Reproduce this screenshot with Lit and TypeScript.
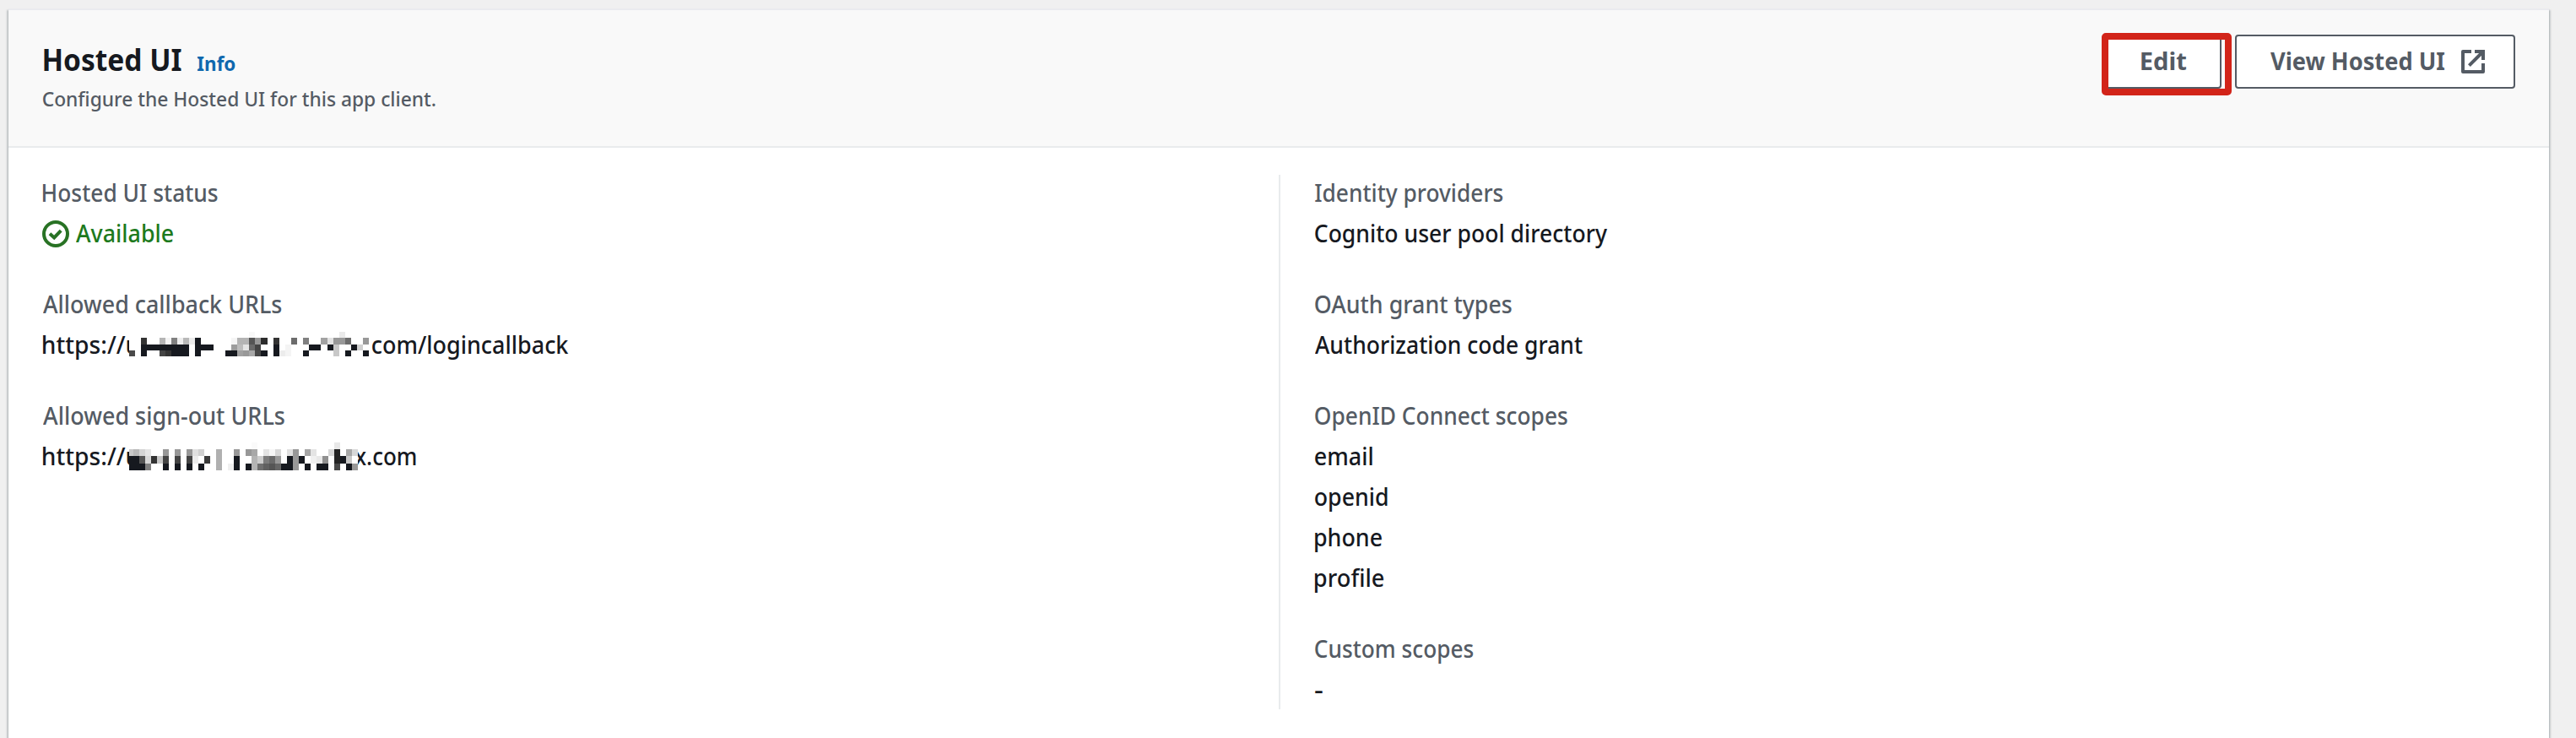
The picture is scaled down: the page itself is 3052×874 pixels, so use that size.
import { LitElement, html, svg, css } from "lit";
import { customElement, property } from "lit/decorators.js";

const FAMILY = '"Noto Sans", "Open Sans", sans-serif';
const ctx = document.createElement("canvas").getContext("2d")!;

/** One line of text whose glyphs are condensed to span exactly `w` pixels. */
@customElement("fit-text")
class FitText extends LitElement {
  @property() text = "";
  @property({ type: Number }) w = 0;
  @property({ type: Number }) size = 28;
  @property({ type: Number }) weight = 400;

  static styles = css`
    :host {
      display: inline-block;
      flex: none;
      white-space: pre;
    }
    .box {
      display: block;
    }
    .glyphs {
      display: inline-block;
      transform-origin: 0 50%;
    }
  `;

  render() {
    // Measured at ten times the size, since the ink bounds are whole pixels.
    ctx.font = `${this.weight} ${this.size * 10}px ${FAMILY}`;
    const m = ctx.measureText(this.text);
    const left = m.actualBoundingBoxLeft / 10;
    const scale = this.w / (m.actualBoundingBoxRight / 10 + left);
    const shift = left * scale;
    return html`<span class="box" style="width:${this.w}px"
      ><span
        class="glyphs"
        style="font-size:${this.size}px;font-weight:${this.weight};transform:translateX(${shift}px) scaleX(${scale})"
        >${this.text}</span
      ></span
    >`;
  }
}

type Mosaic = { cw: number; ch: number; cols: number; rows: Record<number, string>[]; clip: number };

const row = (s: string): Record<number, string> =>
  Object.fromEntries(s.split(" ").map((p) => p.split(":") as [string, string]));

const CALLBACK: Mosaic = {
  cw: 7.11,
  ch: 7.33,
  cols: 40,
  clip: 0,
  rows: [
    row("20:f8 35:ea"),
    row("2:33 5:b5 6:f4 7:80 8:ee 9:b8 10:ec 11:16 17:f5 18:b4 19:b4 20:55 21:98 22:2c 24:33 27:6c 29:80 32:a2 33:e2 34:98 35:98 36:6c 39:98"),
    row("2:16 3:16 4:16 5:16 6:16 7:16 8:16 9:16 11:16 12:16 13:16 17:9c 18:bc 19:e4 20:6a 21:44 24:16 26:f4 30:16 31:16 33:16 34:c8 37:16 38:d0"),
    row("0:4a 2:16 5:44 6:33 7:16 8:16 9:16 11:16 16:16 17:16 18:a0 19:98 20:a8 21:48 22:16 24:16 25:ec 26:f4 29:16 34:c8 36:16 39:16"),
  ],
};

const SIGNOUT: Mosaic = {
  cw: 7,
  ch: 8.2,
  cols: 39,
  clip: 2,
  rows: [
    row("21:fa 35:e8"),
    row("0:c8 1:b8 2:d4 3:e4 6:98 8:98 10:98 11:e0 12:d0 15:b0 18:98 20:98 21:a8 23:e4 24:f6 25:d8 27:e0 28:98 30:a6 31:e4 34:d8 35:24 37:a8 38:d8"),
    row("0:16 1:16 2:55 3:d8 4:33 5:c8 6:44 8:44 10:44 11:ec 13:3a 15:b0 18:16 21:b4 22:cc 23:7c 24:6a 25:98 27:16 28:98 29:16 31:f0 32:e8 33:90 35:24 36:16 37:c8"),
    row("0:16 1:16 2:16 3:80 6:16 8:16 10:16 12:16 15:b0 17:f0 18:16 20:16 21:b4 22:70 23:60 24:55 25:66 26:16 27:16 28:98 30:16 32:16 33:16 35:48 37:16 38:98"),
  ],
};

const mosaic = (m: Mosaic, cls: string) => {
  const w = m.cw * m.cols;
  const h = m.ch * 4;
  return html`<svg class=${cls} width=${w - m.clip} height=${h} viewBox="${m.clip} 0 ${w - m.clip} ${h}" shape-rendering="crispEdges">
    <rect width=${w} height=${h} fill="#fff" />
    ${m.rows.map((r, y) =>
      Object.entries(r).map(([x, g]) => {
        const fill = g === "16" ? "#16191f" : `#${g}${g}${g}`;
        return svg`<rect x=${+x * m.cw} y=${y * m.ch} width=${m.cw} height=${m.ch} fill=${fill} />`;
      })
    )}
  </svg>`;
};

@customElement("app-root")
class AppRoot extends LitElement {
  static styles = css`
    :host {
      display: block;
      height: 874px;
      box-sizing: border-box;
      padding: 10px 32px 0 10px;
      overflow: hidden;
      background: #f0f0f0;
      color: #16191f;
      font-family: "Noto Sans", "Open Sans", sans-serif;
    }
    .panel {
      height: 900px;
      box-sizing: border-box;
      background: #fff;
      border-top: 2px solid #eaebee;
      box-shadow: 0 2px 2px 0 rgba(0, 28, 36, 0.3), 2px 2px 2px 0 rgba(0, 28, 36, 0.15),
        -2px 2px 2px 0 rgba(0, 28, 36, 0.15);
    }
    .header {
      display: flex;
      justify-content: space-between;
      box-sizing: border-box;
      height: 163px;
      padding: 29px 40px 0 42px;
      background: #f9f9f9;
      border-bottom: 2px solid #e9ebed;
    }
    .title {
      display: flex;
      align-items: baseline;
      gap: 19px;
      line-height: 60px;
      height: 60px;
    }
    .info {
      color: #0f68ae;
    }
    .desc {
      margin-left: -1px;
      line-height: 32px;
      color: #545b64;
    }
    .actions {
      display: flex;
      align-items: flex-start;
      gap: 16px;
    }
    .button {
      position: relative;
      display: flex;
      align-items: center;
      box-sizing: border-box;
      height: 64px;
      border: 2px solid #545b64;
      border-radius: 4px;
      padding: 0 40px;
      background: #fff;
      color: #545b64;
      line-height: 60px;
    }
    .button fit-text {
      margin-top: 2px;
    }
    .edit {
      width: 139px;
      padding-left: 42px;
    }
    .view {
      width: 332px;
      padding-right: 32px;
      gap: 18px;
    }
    .highlight {
      position: absolute;
      left: -5px;
      top: -4px;
      width: 154px;
      height: 74px;
      box-sizing: border-box;
      border: 8px solid #d22419;
      border-radius: 5px;
    }
    .external {
      flex: none;
      fill: none;
      stroke: #545b64;
      stroke-width: 2;
    }
    .body {
      display: grid;
      grid-template-columns: 1fr 1fr;
      padding: 32px 40px 0;
    }
    .column {
      display: flex;
      flex-direction: column;
      gap: 39px;
    }
    .column + .column {
      border-left: 2px solid #e9ebed;
      padding-left: 40px;
    }
    .label {
      height: 45px;
      line-height: 42px;
      color: #545b64;
    }
    .label,
    .value {
      display: flex;
      padding-left: 1px;
    }
    .value {
      height: 48px;
      line-height: 48px;
    }
    .available {
      padding-left: 0;
      gap: 8px;
      color: #1d7a1d;
    }
    .status {
      margin-top: 9px;
      fill: none;
      stroke: #287224;
      stroke-width: 2;
    }
    .mosaic-callback {
      position: relative;
      z-index: 1;
      flex: none;
      margin: 9px 4px 0 -11px;
    }
    .mosaic-signout {
      position: relative;
      z-index: 1;
      flex: none;
      margin: 8px -4px 0 -11px;
    }
  `;

  private text(text: string, w: number, size = 28, weight = 500, cls = "") {
    return html`<fit-text class=${cls} text=${text} w=${w} size=${size} weight=${weight}></fit-text>`;
  }

  private field(label: string, w: number, values: [string, number][]) {
    return html`<div>
      <div class="label">${this.text(label, w)}</div>
      ${values.map(([t, tw]) => html`<div class="value">${this.text(t, tw)}</div>`)}
    </div>`;
  }

  render() {
    return html`<section class="panel">
      <header class="header">
        <div>
          <div class="title">
            ${this.text("Hosted UI", 162.6, 36, 700)} ${this.text("Info", 44.3, 24, 700, "info")}
          </div>
          <div class="desc">${this.text("Configure the Hosted UI for this app client.", 464.5, 24)}</div>
        </div>
        <div class="actions">
          <div class="button edit">${this.text("Edit", 53, 28, 700)}<span class="highlight"></span></div>
          <div class="button view">
            ${this.text("View Hosted UI", 206, 28, 700)}
            <svg class="external" width="32" height="32" viewBox="0 0 16 16">
              <path d="M9 2h5v5" />
              <path d="M5.7 10.3 14 2" />
              <path stroke-linejoin="round" d="M14 9v5H2V2h5" />
            </svg>
          </div>
        </div>
      </header>
      <div class="body">
        <div class="column">
          <div>
            <div class="label">${this.text("Hosted UI status", 206.8)}</div>
            <div class="value available">
              <svg class="status" width="32" height="32" viewBox="0 0 16 16">
                <circle cx="8" cy="8" r="7" />
                <path d="M4.5 7.9 7.1 10.2 11.1 6.1" />
              </svg>
              ${this.text("Available", 115)}
            </div>
          </div>
          <div>
            <div class="label">${this.text("Allowed callback URLs", 282.5)}</div>
            <div class="value">
              ${this.text("https://u", 113)}${mosaic(CALLBACK, "mosaic-callback")}${this.text("com/logincallback", 232.5)}
            </div>
          </div>
          <div>
            <div class="label">${this.text("Allowed sign-out URLs", 286)}</div>
            <div class="value">
              ${this.text("https://u", 113)}${mosaic(SIGNOUT, "mosaic-signout")}${this.text("x.com", 72.5)}
            </div>
          </div>
        </div>
        <div class="column">
          ${this.field("Identity providers", 222.5, [["Cognito user pool directory", 346]])}
          ${this.field("OAuth grant types", 233, [["Authorization code grant", 316.5]])}
          ${this.field("OpenID Connect scopes", 299, [
            ["email", 68],
            ["openid", 85.7],
            ["phone", 79],
            ["profile", 81.3],
          ])}
          ${this.field("Custom scopes", 187.5, [["-", 9]])}
        </div>
      </div>
    </section>`;
  }
}
